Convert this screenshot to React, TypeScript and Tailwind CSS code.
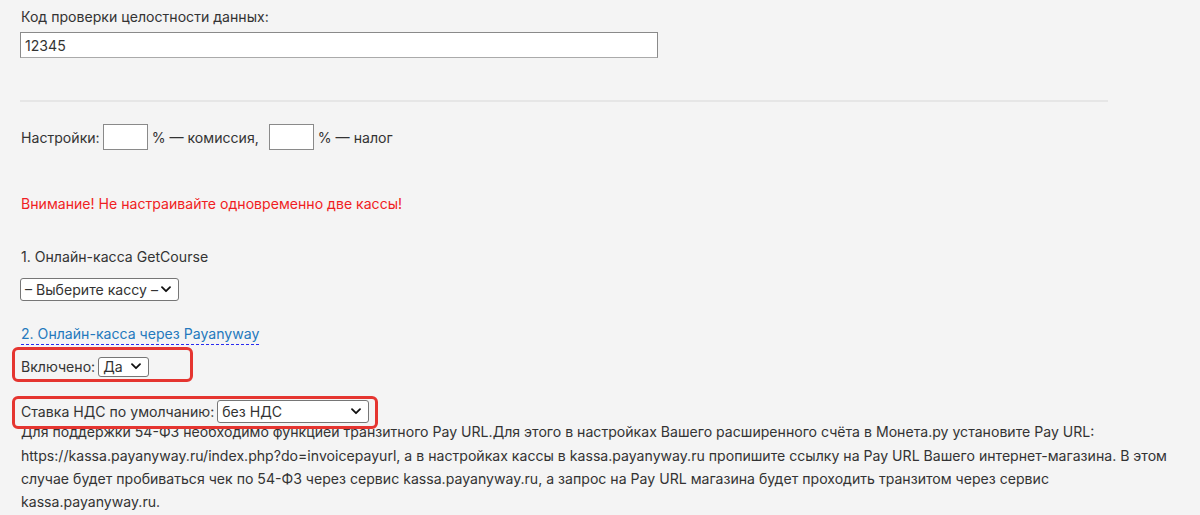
import React from "react";

function Chevron() {
  return (
    <svg width="10" height="7" viewBox="0 0 10 7" className="shrink-0">
      <path d="M1 1.2 L5 5.2 L9 1.2" fill="none" stroke="#111" strokeWidth="1.8" strokeLinecap="round" strokeLinejoin="round" />
    </svg>
  );
}

function Select({ label, w, h }: { label: string; w: string; h: string }) {
  return (
    <div className={`inline-flex items-center justify-between bg-white border border-[#767676] rounded-[3px] pl-[4px] pr-[7px] ${w} ${h}`}>
      <span className="whitespace-nowrap">{label}</span>
      <Chevron />
    </div>
  );
}

export default function App() {
  return (
    <div
      className="w-[1200px] h-[515px] overflow-hidden bg-[#f4f4f4] text-[#333] text-[14.1px] leading-[23.3px]"
      style={{ fontFamily: "Inter, 'Noto Sans', sans-serif" }}
    >
      <div className="pl-[20px] pr-[20px] pt-[5px]">
        <div className="pl-[1px]">Код проверки целостности данных:</div>
        <div className="mt-[4px] w-[638px] h-[26px] bg-white border border-[#8a8a8a] border-b-[#aaa] flex items-center pl-[4px]">
          12345
        </div>
        <div className="mt-[42px] w-[1088px] h-[2px] bg-[#e6e6e6]" />
        <div className="mt-[22px] flex items-center h-[26px] pl-[1px]">
          <span>Настройки:</span>
          <div className="ml-[3px] w-[45px] h-[26px] bg-white border border-[#8a8a8a]" />
          <span className="ml-[4px]">% — комиссия,</span>
          <div className="ml-[10px] w-[45px] h-[26px] bg-white border border-[#8a8a8a]" />
          <span className="ml-[4px]">% — налог</span>
        </div>
        <div className="mt-[42px] text-[#f01e23] pl-[1px]">Внимание! Не настраивайте одновременно две кассы!</div>
        <div className="mt-[29px] pl-[1px]">1. Онлайн-касса GetCourse</div>
        <div className="mt-[10px]">
          <Select label="– Выберите кассу –" w="w-[159px]" h="h-[23px]" />
        </div>
        <div className="mt-[21px] pl-[1px]">
          <span className="inline-block leading-[20px] text-[#2479bd] border-b border-dashed border-[#2a2af0]">
            2. Онлайн-касса через Payanyway
          </span>
        </div>
        <div className="relative mt-[12px] flex items-center h-[19px] pl-[1px]">
          <span>Включено:</span>
          <div className="ml-[3px]">
            <Select label="Да" w="w-[51px]" h="h-[20px]" />
          </div>
          <div className="absolute left-[-8px] top-[-10px] w-[181px] h-[35px] border-[3px] border-[#e53530] rounded-[6px]" />
        </div>
        <div className="relative mt-[24px] flex items-center h-[23px] pl-[1px]">
          <span>Ставка НДС по умолчанию:</span>
          <div className="ml-[3px]">
            <Select label="без НДС" w="w-[152px]" h="h-[23px]" />
          </div>
          <div className="absolute left-[-8px] top-[-4px] w-[366px] h-[33px] border-[3px] border-[#e53530] rounded-[6px]" />
        </div>
        <p className="-mt-[3px] pl-[1px] w-[1160px]">
          Для поддержки 54-ФЗ необходимо функцией транзитного Pay URL.Для этого в настройках Вашего расширенного счёта в Монета.ру установите Pay URL: https://kassa.payanyway.ru/index.php?do=invoicepayurl, а в настройках кассы в kassa.payanyway.ru пропишите ссылку на Pay URL Вашего интернет-магазина. В этом случае будет пробиваться чек по 54-ФЗ через сервис kassa.payanyway.ru, а запрос на Pay URL магазина будет проходить транзитом через сервис kassa.payanyway.ru.
        </p>
      </div>
    </div>
  );
}
